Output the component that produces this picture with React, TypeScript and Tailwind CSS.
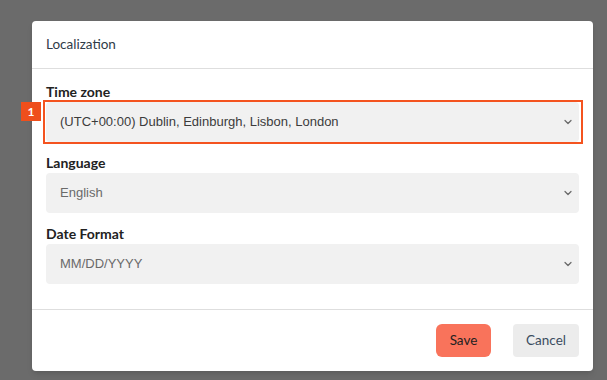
import React from 'react'
import { ChevronDown } from 'lucide-react'

const Field: React.FC<{ value: string; dark?: boolean }> = ({ value, dark }) => (
  <div className="flex h-[40px] items-center justify-between rounded-[4px] bg-[#f1f1f1] pl-[14px] pr-[5px]">
    <span
      className={`text-[13px] font-['Liberation_Sans',Arial,sans-serif] ${dark ? 'text-[#3c3c3c]' : 'text-[#6a6a6a]'}`}
    >
      {value}
    </span>
    <ChevronDown className="h-[12px] w-[12px] text-[#6a6a6a]" strokeWidth={2.5} />
  </div>
)

export default function App() {
  return (
    <div className="h-[380px] w-[607px] bg-[#6b6b6b] pl-[32px] pt-[21px] font-['Lato',sans-serif]">
      <div className="flex h-[350px] w-[561px] flex-col rounded-[4px] bg-white shadow-md">
        {/* Header */}
        <div className="flex h-[48px] items-center border-b border-[#dedede] px-[14px]">
          <span className="text-[13.5px] text-[#2f3b48]">Localization</span>
        </div>

        {/* Body */}
        <div className="flex-1 pl-[14px] pr-[14px] pt-[15px]">
          <label className="mb-[2px] block text-[14px] font-bold leading-[16px] text-[#222]">Time zone</label>
          <div className="relative">
            <Field value="(UTC+00:00) Dublin, Edinburgh, Lisbon, London" dark />
            {/* annotation */}
            <div className="pointer-events-none absolute -bottom-[2px] -left-[3px] -right-[4px] -top-[2px] border-2 border-[#f4531f]" />
            <div className="absolute -left-[25px] top-0 flex h-[19px] w-[20px] items-center justify-center bg-[#ef4f1c] text-[12px] font-bold text-white">
              1
            </div>
          </div>

          <label className="mb-[2px] mt-[13px] block text-[14px] font-bold leading-[16px] text-[#222]">Language</label>
          <Field value="English" />

          <label className="mb-[2px] mt-[13px] block text-[14px] font-bold leading-[16px] text-[#222]">Date Format</label>
          <Field value="MM/DD/YYYY" />
        </div>

        {/* Footer */}
        <div className="flex h-[62px] items-center justify-end gap-[22px] border-t border-[#dedede] px-[14px]">
          <button className="h-[33px] w-[55px] rounded-[6px] bg-[#f9735b] text-[13.5px] text-[#222]">Save</button>
          <button className="h-[33px] w-[66px] rounded-[4px] bg-[#ececec] text-[13.5px] text-[#3b4d5f]">Cancel</button>
        </div>
      </div>
    </div>
  )
}
